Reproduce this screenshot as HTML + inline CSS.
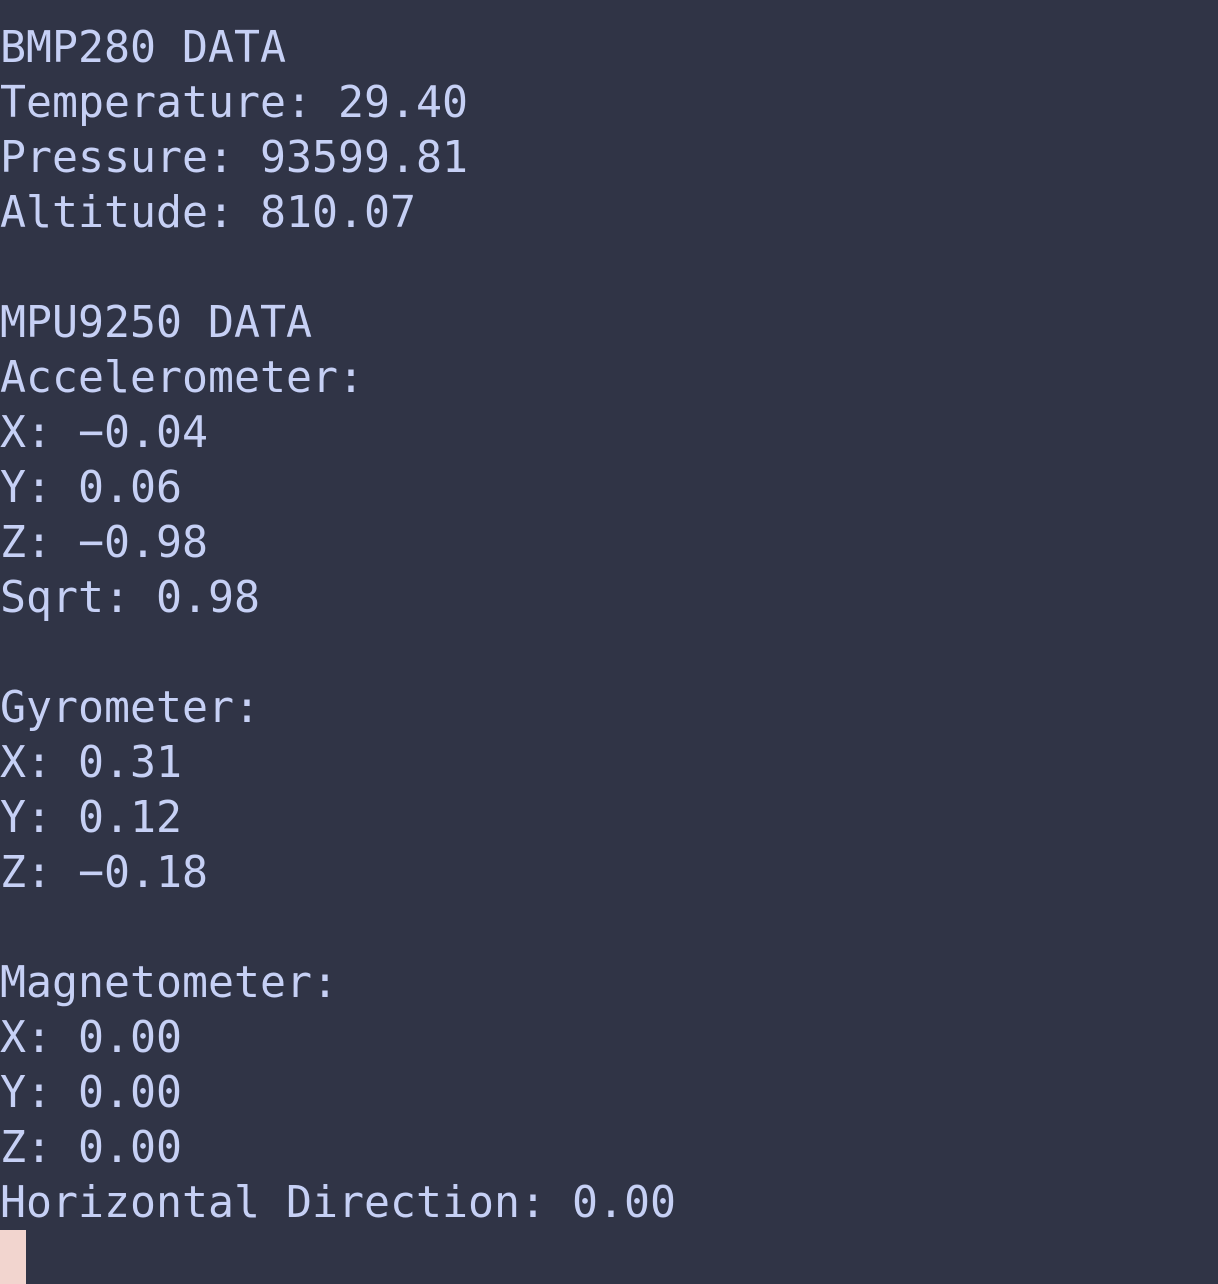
<!DOCTYPE html>
<html><head><meta charset="utf-8"><style>
html,body{margin:0;padding:0;background:#303446;width:1218px;height:1284px;overflow:hidden}
pre{margin:0;position:absolute;top:21px;left:0;font-family:"DejaVu Sans Mono","Liberation Mono",monospace;font-size:43.2px;line-height:55px;color:#c6d0f5}
.cur{position:absolute;left:0;top:1230px;width:26px;height:54px;background:#f2d5cf}
</style></head><body>
<pre>BMP280 DATA
Temperature: 29.40
Pressure: 93599.81
Altitude: 810.07

MPU9250 DATA
Accelerometer:
X: −0.04
Y: 0.06
Z: −0.98
Sqrt: 0.98

Gyrometer:
X: 0.31
Y: 0.12
Z: −0.18

Magnetometer:
X: 0.00
Y: 0.00
Z: 0.00
Horizontal Direction: 0.00</pre>
<div class="cur"></div>
</body></html>
